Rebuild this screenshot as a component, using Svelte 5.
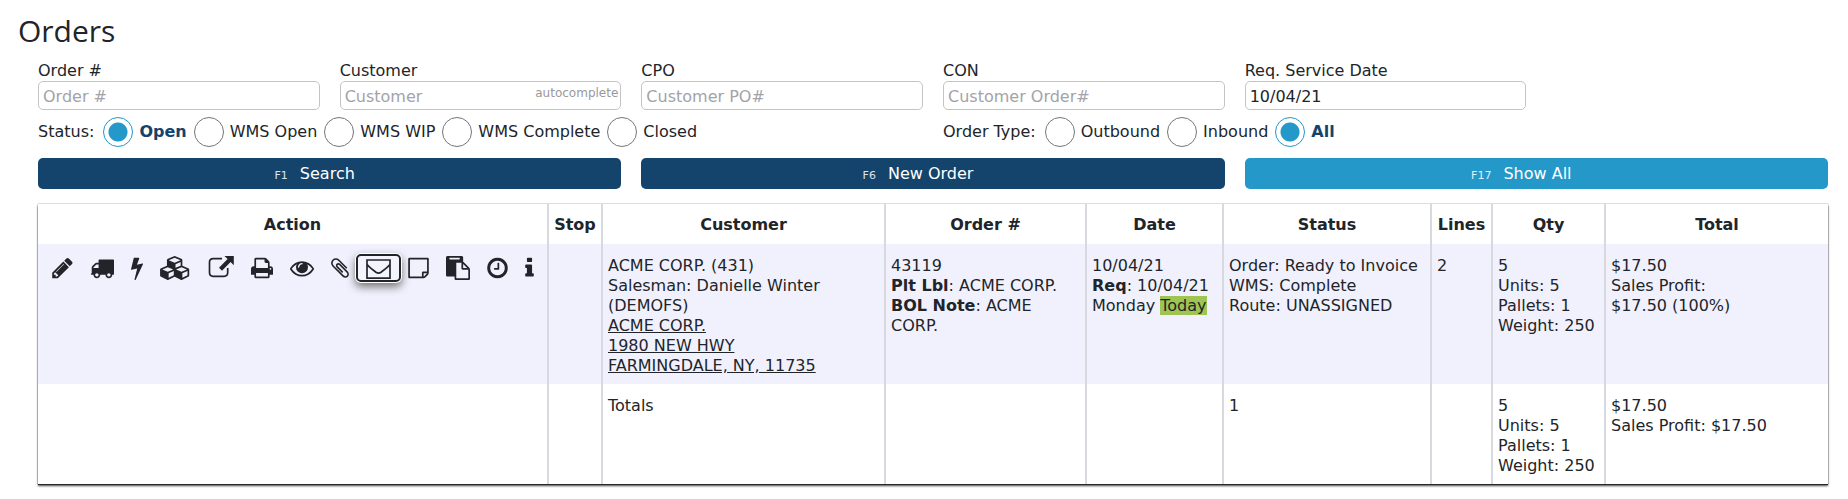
<script>
  const fields = [
    { id: 'order', label: 'Order #', placeholder: 'Order #', value: '' },
    { id: 'customer', label: 'Customer', placeholder: 'Customer', value: '', hint: 'autocomplete' },
    { id: 'cpo', label: 'CPO', placeholder: 'Customer PO#', value: '' },
    { id: 'con', label: 'CON', placeholder: 'Customer Order#', value: '' },
    { id: 'date', label: 'Req. Service Date', placeholder: '', value: '10/04/21' }
  ];
  const statuses = ['Open', 'WMS Open', 'WMS WIP', 'WMS Complete', 'Closed'];
  const types = ['Outbound', 'Inbound', 'All'];
  let status = $state('Open');
  let type = $state('All');

  const buttons = [
    { key: 'F1', label: 'Search' },
    { key: 'F6', label: 'New Order' },
    { key: 'F17', label: 'Show All', light: true }
  ];
  const columns = [
    ['Action', 'c-action'], ['Stop', 'c-stop'], ['Customer', 'c-customer'], ['Order #', 'c-order'],
    ['Date', 'c-date'], ['Status', 'c-status'], ['Lines', 'c-lines'], ['Qty', 'c-qty'], ['Total', 'c-total']
  ];
  const actions = [
    { name: 'Edit', w: 21, box: '128 0 1536 1792', d: 'M491 1536l91-91-235-235-91 91v107h128v128h107zm523-928q0-22-22-22-10 0-17 7l-542 542q-7 7-7 17 0 22 22 22 10 0 17-7l542-542q7-7 7-17zm-54-192l416 416-832 832h-416v-416zm683 96q0 53-37 90l-166 166-416-416 166-165q36-38 90-38 53 0 91 38l235 234q37 39 37 91z' },
    { name: 'Ship', w: 24, box: '0 0 1792 1792', d: 'M640 1408q0-52-38-90t-90-38-90 38-38 90 38 90 90 38 90-38 38-90zm-384-512h384v-256h-158q-13 0-22 9l-195 195q-9 9-9 22v30zm1280 512q0-52-38-90t-90-38-90 38-38 90 38 90 90 38 90-38 38-90zm256-1088v1024q0 15-4 26.500t-13.500 18.500-16.500 11.500-23.500 6-22.500 2-25.500 0-22.500-.5q0 106-75 181t-181 75-181-75-75-181h-384q0 106-75 181t-181 75-181-75-75-181h-64q-3 0-22.500.5t-25.500 0-22.500-2-23.500-6-16.500-11.500-13.500-18.500-4-26.500q0-26 19-45t45-19v-320q0-8-.5-35t0-38 2.500-34.500 6.500-37 14-30.500 22.500-30l198-198q19-19 50.500-32t58.500-13h160v-192q0-26 19-45t45-19h1024q26 0 45 19t19 45z' },
    { name: 'Process', w: 12, box: '448 0 896 1792', d: 'M1333 566q18 20 7 44l-540 1157q-13 25-42 25-4 0-14-2-17-5-25.500-19t-4.500-30l197-808-406 101q-4 1-12 1-18 0-31-11-18-15-13-39l201-825q4-14 16-23t28-9h328q19 0 32 12.500t13 29.500q0 8-5 18l-171 463 396-98q8-2 12-2 19 0 34 15z' },
    { name: 'Inventory', w: 31, box: '0 0 2304 1792', d: 'M640 1632l384-192v-314l-384 164v342zm-64-454l404-173-404-173-404 173zm1088 454l384-192v-314l-384 164v342zm-64-454l404-173-404-173-404 173zm-448-293l384-165v-266l-384 164v267zm-64-379l441-189-441-189-441 189zm1088 518v416q0 36-19 67t-52 47l-448 224q-25 14-57 14t-57-14l-448-224q-4-2-7-4-2 2-7 4l-448 224q-25 14-57 14t-57-14l-448-224q-33-16-52-47t-19-67v-416q0-38 21.500-70t56.500-48l434-186v-400q0-38 21.500-70t56.500-48l448-192q23-10 50-10t50 10l448 192q35 16 56.500 48t21.500 70v400l434 186q36 16 57 48t21 70z' },
    { name: 'Open', w: 26, box: '0 0 26 24', line: 'M14 2.600H5.200Q1.500 2.600 1.500 6.300V16.600Q1.500 20.300 5.200 20.300H16Q19.700 20.300 19.700 16.600V12', d: 'M16.500 0h9.300v9.300l-3.200-3.200-8.600 8.600-3-3 8.600-8.600z' },
    { name: 'Print', w: 22, box: '64 0 1664 1792', d: 'M448 1536h896v-256h-896v256zm0-640h896v-384h-160q-40 0-68-28t-28-68v-160h-640v640zm1152 64q0-26-19-45t-45-19-45 19-19 45 19 45 45 19 45-19 19-45zm128 0v416q0 13-9.500 22.500t-22.500 9.500h-224v160q0 40-28 68t-68 28h-960q-40 0-68-28t-28-68v-160h-224q-13 0-22.500-9.500t-9.500-22.500v-416q0-79 56.500-135.500t135.500-56.500h64v-544q0-40 28-68t68-28h672q40 0 88 20t76 48l152 152q28 28 48 76t20 88v256h64q79 0 135.500 56.500t56.500 135.500z' },
    { name: 'View', w: 24, box: '0 0 1792 1792', d: 'M1664 960q-152-236-381-353 61 104 61 225 0 185-131.500 316.500t-316.500 131.500-316.500-131.500-131.500-316.500q0-121 61-225-229 117-381 353 133 205 333.500 326.500t434.500 121.500 434.500-121.500 333.500-326.500zm-720-384q0-20-14-34t-34-14q-125 0-214.500 89.500t-89.500 214.500q0 20 14 34t34 14 34-14 14-34q0-86 61-147t147-61q20 0 34-14t14-34zm848 384q0 34-20 69-140 230-376.500 368.500t-499.500 138.500-499.500-139-376.500-368q-20-35-20-69t20-69q140-229 376.500-368t499.500-139 499.500 139 376.500 368q20 35 20 69z' },
    { name: 'Attach', w: 18, box: '192 0 1408 1792', d: 'M1596 1385q0 117-79 196t-196 79q-135 0-235-100l-777-776q-113-115-113-271 0-159 110-270t269-111q158 0 273 113l605 606q10 10 10 22 0 16-30.500 46.500t-46.500 30.500q-13 0-23-10l-606-607q-79-77-181-77-106 0-179 75t-73 181q0 105 76 181l776 777q63 63 145 63 64 0 106-42t42-106q0-82-63-145l-581-581q-26-24-60-24-29 0-48 19t-19 48q0 32 25 59l410 410q10 10 10 22 0 16-31 47t-47 31q-12 0-22-10l-410-410q-63-61-63-149 0-82 57-139t139-57q88 0 149 63l581 581q100 98 100 235z' },
    { name: 'Email', w: 25, box: '0 0 25 24', active: true, line: 'M1 4h23v18.200H1zM1 8.500Q2 10 5 12.300L10 16.200Q12.500 17.900 15 16.200L20 12.300Q23 10 24 8.500' },
    { name: 'Note', w: 21, box: '0 0 1536 1792', d: 'M1400 1280h-248v248q29-10 41-22l185-185q12-12 22-41zm-280-128h288v-896h-1280v1280h896v-288q0-40 28-68t68-28zm416-928v1024q0 40-20 88t-48 76l-184 184q-28 28-76 48t-88 20h-1024q-40 0-68-28t-28-68v-1344q0-40 28-68t68-28h1344q40 0 68 28t28 68z' },
    { name: 'Copy', w: 24, box: '0 0 1792 1792', d: 'M768 1664h896v-640h-416q-40 0-68-28t-28-68v-416h-384v1152zm256-1440v-64q0-13-9.500-22.500t-22.500-9.500h-704q-13 0-22.500 9.500t-9.500 22.500v64q0 13 9.500 22.500t22.500 9.500h704q13 0 22.500-9.500t9.500-22.500zm256 672h299l-299-299v299zm512 128v672q0 40-28 68t-68 28h-960q-40 0-68-28t-28-68v-160h-544q-40 0-68-28t-28-68v-1344q0-40 28-68t68-28h1088q40 0 68 28t28 68v328q21 13 36 28l408 408q28 28 48 76t20 88z' },
    { name: 'History', w: 21, box: '128 0 1536 1792', d: 'M1024 544v448q0 14-9 23t-23 9h-320q-14 0-23-9t-9-23v-64q0-14 9-23t23-9h224v-352q0-14 9-23t23-9h64q14 0 23 9t9 23zm416 352q0-148-73-273t-198-198-273-73-273 73-198 198-73 273 73 273 198 198 273 73 273-73 198-198 73-273zm224 0q0 209-103 385.500t-279.500 279.500-385.500 103-385.500-103-279.500-279.500-103-385.500 103-385.500 279.500-279.500 385.500-103 385.500 103 279.500 279.500 103 385.500z' },
    { name: 'Info', w: 9, box: '576 0 640 1792', d: 'M1216 1344v128q0 26-19 45t-45 19h-512q-26 0-45-19t-19-45v-128q0-26 19-45t45-19h64v-384h-64q-26 0-45-19t-19-45v-128q0-26 19-45t45-19h384q26 0 45 19t19 45v576h64q26 0 45 19t19 45zm-128-1152v192q0 26-19 45t-45 19h-256q-26 0-45-19t-19-45v-192q0-26 19-45t45-19h256q26 0 45 19t19 45z' }
  ];
</script>

<main>
  <h1>Orders</h1>
  <form onsubmit={(e) => e.preventDefault()}>
    <div class="fields">
      {#each fields as f}
        <div class="field">
          <label for={f.id}>{f.label}</label>
          <div class="control">
            <input id={f.id} type="text" placeholder={f.placeholder} value={f.value} />
            {#if f.hint}<span class="hint">{f.hint}</span>{/if}
          </div>
        </div>
      {/each}
    </div>
    <div class="filters">
      <div class="radios" role="radiogroup" aria-label="Status">
        <span class="lead">Status:</span>
        {#each statuses as s}
          <label class:on={status === s}><input type="radio" name="status" value={s} bind:group={status} />{s}</label>
        {/each}
      </div>
      <div class="radios" role="radiogroup" aria-label="Order Type">
        <span class="lead">Order Type:</span>
        {#each types as t}
          <label class:on={type === t}><input type="radio" name="type" value={t} bind:group={type} />{t}</label>
        {/each}
      </div>
    </div>
    <div class="buttons">
      {#each buttons as b}
        <button type="button" class="main" class:light={b.light}><small>{b.key}</small>{b.label}</button>
      {/each}
    </div>
  </form>

  <table>
    <colgroup>
      {#each columns as c}<col class={c[1]} />{/each}
    </colgroup>
    <thead>
      <tr>{#each columns as c}<th scope="col">{c[0]}</th>{/each}</tr>
    </thead>
    <tbody>
      <tr class="shade">
        <td>
          <div class="actions">
            {#each actions as a}
              <button type="button" class="icon" class:active={a.active} aria-label={a.name}>
                <svg viewBox={a.box} width={a.w} height="24" aria-hidden="true">
                  {#if a.line}<path class="line" d={a.line} />{/if}
                  {#if a.d}<path d={a.d} />{/if}
                </svg>
              </button>
            {/each}
          </div>
        </td>
        <td></td>
        <td>
          <div>ACME CORP. (431)</div>
          <div>Salesman: Danielle Winter<br />(DEMOFS)</div>
          <a href="#map">ACME CORP.<br />1980 NEW HWY<br />FARMINGDALE, NY, 11735</a>
        </td>
        <td>43119<br /><b>Plt Lbl</b>: ACME CORP.<br /><b>BOL Note</b>: ACME CORP.</td>
        <td class="tight">10/04/21<br /><b>Req</b>: 10/04/21<br />Monday <mark>Today</mark></td>
        <td class="tight">Order: Ready to Invoice<br />WMS: Complete<br />Route: UNASSIGNED</td>
        <td>2</td>
        <td class="tight">5<br />Units: 5<br />Pallets: 1<br />Weight: 250</td>
        <td>$17.50<br />Sales Profit:<br />$17.50 (100%)</td>
      </tr>
      <tr>
        <td></td>
        <td></td>
        <td>Totals</td>
        <td></td>
        <td></td>
        <td>1</td>
        <td></td>
        <td class="tight">5<br />Units: 5<br />Pallets: 1<br />Weight: 250</td>
        <td>$17.50<br />Sales Profit: $17.50</td>
      </tr>
    </tbody>
  </table>
</main>

<style>
  :global(body) { margin: 0; background: #fff; }
  main {
    padding: 10px 20px 14px 38px;
    font: 16px/20px Verdana, "DejaVu Sans", sans-serif;
    color: #212529;
  }
  h1 {
    margin: 0 0 9px -20px;
    font: 400 30px/42px "Segoe UI", "Open Sans", sans-serif;
  }
  .fields { display: grid; grid-template-columns: repeat(6, 1fr); gap: 20px; }
  .field label { display: block; }
  .control { position: relative; }
  .control input {
    display: block;
    box-sizing: border-box;
    width: 100%;
    height: 29px;
    padding: 1px 4px 0;
    border: 1px solid #c4c4c8;
    border-radius: 5px;
    background: #fff;
    font: inherit;
    color: inherit;
  }
  input::placeholder { color: #a3a3a9; opacity: 1; }
  .hint {
    position: absolute;
    top: 3px;
    right: 3px;
    font-size: 12px;
    line-height: 18px;
    color: #999;
  }
  .filters { display: grid; grid-template-columns: 1fr 1fr; gap: 20px; padding: 7px 0 11px; }
  .radios { display: flex; align-items: center; white-space: nowrap; }
  .lead { margin-right: 9px; }
  .radios label { display: flex; align-items: center; margin-right: 7px; }
  .radios label.on { font-weight: 700; color: #14446c; }
  .radios input {
    appearance: none;
    box-sizing: border-box;
    width: 30px;
    height: 30px;
    margin: 0 6px 0 0;
    border: 1px solid #75757a;
    border-radius: 50%;
    background: #fff;
  }
  .radios input:checked {
    border-color: #2398c9;
    background: radial-gradient(circle, #2398c9 9px, #fff 10px);
  }
  .buttons { display: grid; grid-template-columns: repeat(3, 1fr); gap: 20px; }
  .main {
    height: 31px;
    padding: 2px 30px 0 0;
    border: 0;
    border-radius: 5px;
    background: #14446c;
    color: #fff;
    font: inherit;
  }
  .main small { margin-right: 12px; font-size: 11px; opacity: 0.85; }
  .main.light { background: #2398c9; }

  table {
    width: 100%;
    margin-top: 15px;
    table-layout: fixed;
    border-collapse: separate;
    border-spacing: 0;
    box-shadow: 0 0 1px #444, 0 1px 0 #222, 0 2px 2px #444;
  }
  .c-action { width: 511px; }
  .c-stop { width: 54px; }
  .c-customer { width: 283px; }
  .c-order { width: 201px; }
  .c-date { width: 137px; }
  .c-status { width: 208px; }
  .c-lines { width: 61px; }
  .c-qty { width: 113px; }
  .c-total { width: 222px; }
  th { padding: 11px 0 9px; text-align: center; }
  td { padding: 12px 6px 8px 5px; vertical-align: top; }
  th, td { background: #fff; border-right: 2px solid #d8d8df; }
  th:last-child, td:last-child { border-right: 0; }
  .shade td { background: #f1f1fe; }
  .tight { white-space: nowrap; }
  a { color: inherit; text-decoration: underline; }
  mark { background: #a0c452; color: inherit; }
  .actions { display: flex; gap: 1px; padding-left: 1px; }
  .icon {
    display: flex;
    padding: 0 8px;
    border: 0;
    border-radius: 3px;
    background: none;
    color: #212529;
  }
  .icon svg { display: block; fill: currentColor; }
  .icon .line { fill: none; stroke: currentColor; stroke-width: 1.7; }
  .icon.active { outline: 2px solid #212529; box-shadow: 0 0 0 3px #fff, 0 4px 8px 3px #777; background: #f4f4fd; }
</style>
